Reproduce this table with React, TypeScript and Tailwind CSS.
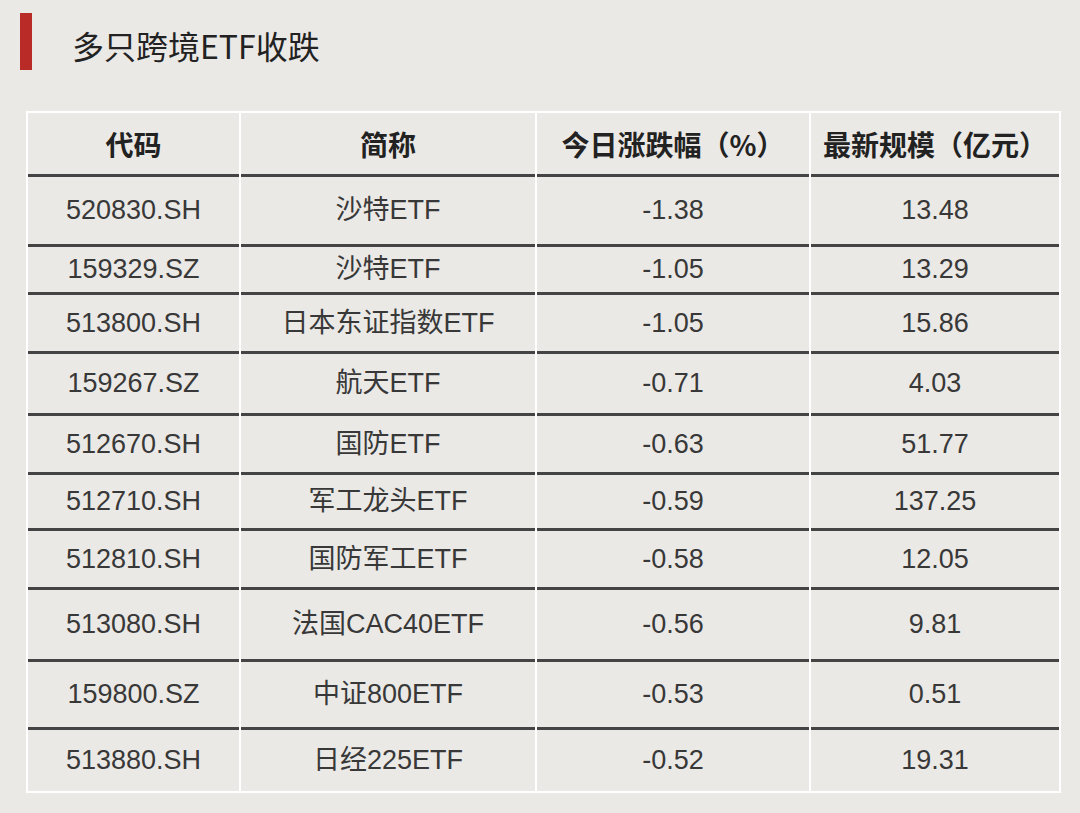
const rows = [
  { code: '520830.SH', name: '沙特ETF', chg: '-1.38', size: '13.48', h: 'h-[70px]' },
  { code: '159329.SZ', name: '沙特ETF', chg: '-1.05', size: '13.29', h: 'h-[48px]' },
  { code: '513800.SH', name: '日本东证指数ETF', chg: '-1.05', size: '15.86', h: 'h-[59px]' },
  { code: '159267.SZ', name: '航天ETF', chg: '-0.71', size: '4.03', h: 'h-[62px]' },
  { code: '512670.SH', name: '国防ETF', chg: '-0.63', size: '51.77', h: 'h-[59px]' },
  { code: '512710.SH', name: '军工龙头ETF', chg: '-0.59', size: '137.25', h: 'h-[56px]' },
  { code: '512810.SH', name: '国防军工ETF', chg: '-0.58', size: '12.05', h: 'h-[59px]' },
  { code: '513080.SH', name: '法国CAC40ETF', chg: '-0.56', size: '9.81', h: 'h-[72px]' },
  { code: '159800.SZ', name: '中证800ETF', chg: '-0.53', size: '0.51', h: 'h-[68px]' },
  { code: '513880.SH', name: '日经225ETF', chg: '-0.52', size: '19.31', h: 'h-[61px]' },
];

const font = { fontFamily: '"Liberation Sans", "Noto Sans CJK SC", sans-serif' };

export default function App() {
  return (
    <div className="w-full h-[813px] bg-[#ebe9e6] pt-[13px]" style={font}>
      {/* 标题 */}
      <div className="flex items-center h-[57px] pl-[20px]">
        <div className="w-[12px] h-[57px] bg-[#b92b27]" />
        <span
          className="ml-[40px] mt-[6px] text-[32px] text-[#222]"
          style={{ fontFamily: '"Noto Sans CJK SC", sans-serif' }}
        >
          多只跨境ETF收跌
        </span>
      </div>

      {/* 表格 */}
      <div className="mt-[41px] ml-[26px] w-[1035px] border-2 border-white bg-white">
        <div className="grid grid-cols-[211px_294px_272px_248px] gap-x-[2px]">
          {['代码', '简称', '今日涨跌幅（%）', '最新规模（亿元）'].map((t) => (
            <div
              key={t}
              className="h-[64px] bg-[#ebe9e6] border-b-[3px] border-[#444] flex items-center justify-center text-[28px] font-bold text-[#222]"
              style={{ fontFamily: '"Noto Sans CJK SC", sans-serif' }}
            >
              {t}
            </div>
          ))}
          {rows.map((r, i) =>
            [r.code, r.name, r.chg, r.size].map((v, j) => (
              <div
                key={i + '-' + j}
                className={
                  r.h +
                  ' bg-[#ebe9e6] flex items-center justify-center text-[27px] text-[#383838] ' +
                  (i < rows.length - 1 ? 'border-b-[3px] border-[#444]' : '')
                }
              >
                {v}
              </div>
            ))
          )}
        </div>
      </div>
    </div>
  );
}
